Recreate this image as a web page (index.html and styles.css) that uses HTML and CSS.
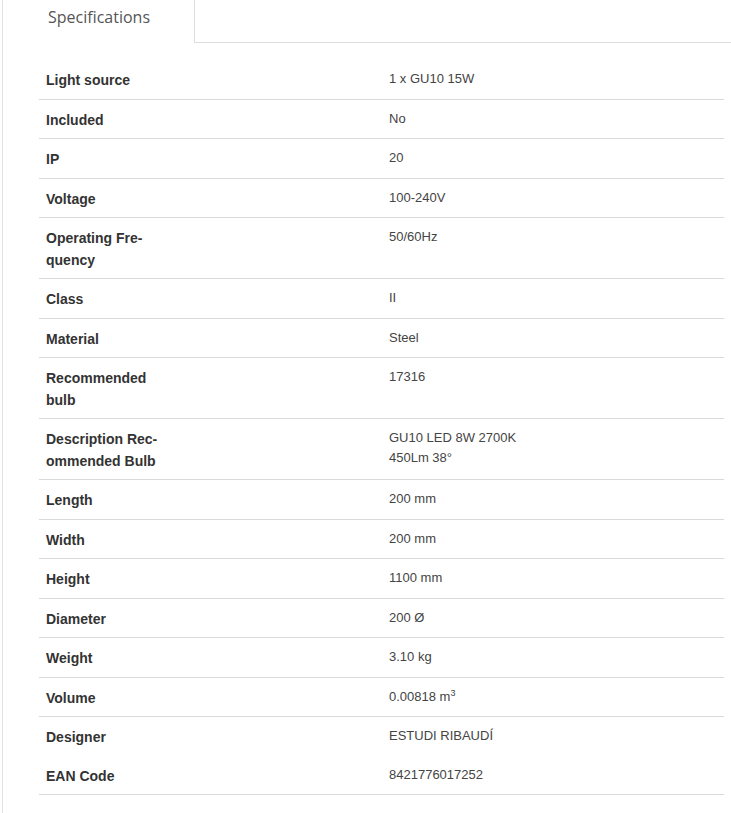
FILE: index.html
```html
<!DOCTYPE html>
<html lang="en">
<head>
<meta charset="utf-8">
<title>Specifications</title>
<link rel="stylesheet" href="styles.css">
</head>
<body>
<div class="panel">
  <div class="tabs">
    <div class="tab">Specifications</div>
    <div class="tab-fill"></div>
  </div>
  <table class="specs">
    <colgroup><col class="c-label"><col class="c-value"></colgroup>
    <tbody>
      <tr><th>Light source</th><td>1 x GU10 15W</td></tr>
      <tr><th>Included</th><td>No</td></tr>
      <tr><th>IP</th><td>20</td></tr>
      <tr><th>Voltage</th><td>100-240V</td></tr>
      <tr><th>Operating Fre&shy;quency</th><td>50/60Hz</td></tr>
      <tr><th>Class</th><td>II</td></tr>
      <tr><th>Material</th><td>Steel</td></tr>
      <tr><th>Recommended bulb</th><td>17316</td></tr>
      <tr><th>Description Rec&shy;ommended Bulb</th><td class="narrow">GU10 LED 8W 2700K 450Lm 38°</td></tr>
      <tr><th>Length</th><td>200 mm</td></tr>
      <tr><th>Width</th><td>200 mm</td></tr>
      <tr><th>Height</th><td>1100 mm</td></tr>
      <tr><th>Diameter</th><td>200 Ø</td></tr>
      <tr><th>Weight</th><td>3.10 kg</td></tr>
      <tr><th>Volume</th><td>0.00818 m<sup>3</sup></td></tr>
      <tr class="no-line"><th>Designer</th><td>ESTUDI RIBAUDÍ</td></tr>
      <tr><th>EAN Code</th><td>8421776017252</td></tr>
    </tbody>
  </table>
</div>
</body>
</html>
```

FILE: styles.css
```css
html, body {
  margin: 0;
  padding: 0;
  background: #fff;
}

body {
  padding-left: 2px;
}

.panel {
  border-left: 1px solid #e2e2e2;
  min-height: 813px;
  box-sizing: border-box;
}

.tabs {
  display: flex;
  height: 43px;
}

.tab {
  width: 192px;
  border-right: 1px solid #dedede;
  font-family: "Open Sans", sans-serif;
  font-size: 16px;
  color: #555;
  text-align: center;
  line-height: 34px;
  box-sizing: border-box;
  padding-left: 1px;
}

.tab-fill {
  flex: 1;
  border-bottom: 1px solid #dedede;
}

.specs {
  margin: 17px 7px 0 36px;
  width: 685px;
  border-collapse: collapse;
  table-layout: fixed;
}

.c-label {
  width: 343px;
}

.specs tr {
  border-bottom: 1px solid #d9d9d9;
}

.specs tr.no-line {
  border-bottom: none;
}

.specs th {
  text-align: left;
  vertical-align: top;
  font-family: "Liberation Sans", Arial, sans-serif;
  font-weight: bold;
  font-size: 14px;
  line-height: 21.5px;
  color: #333;
  padding: 10px 213px 7px 7px;
}

.specs td {
  vertical-align: top;
  font-family: "Liberation Sans", Arial, sans-serif;
  font-size: 13px;
  line-height: 19.5px;
  color: #444;
  padding: 9px 7px 7px 7px;
}

.specs td.narrow {
  padding-right: 200px;
}

.specs sup {
  font-size: 9px;
  line-height: 0;
  vertical-align: 5px;
}
```
